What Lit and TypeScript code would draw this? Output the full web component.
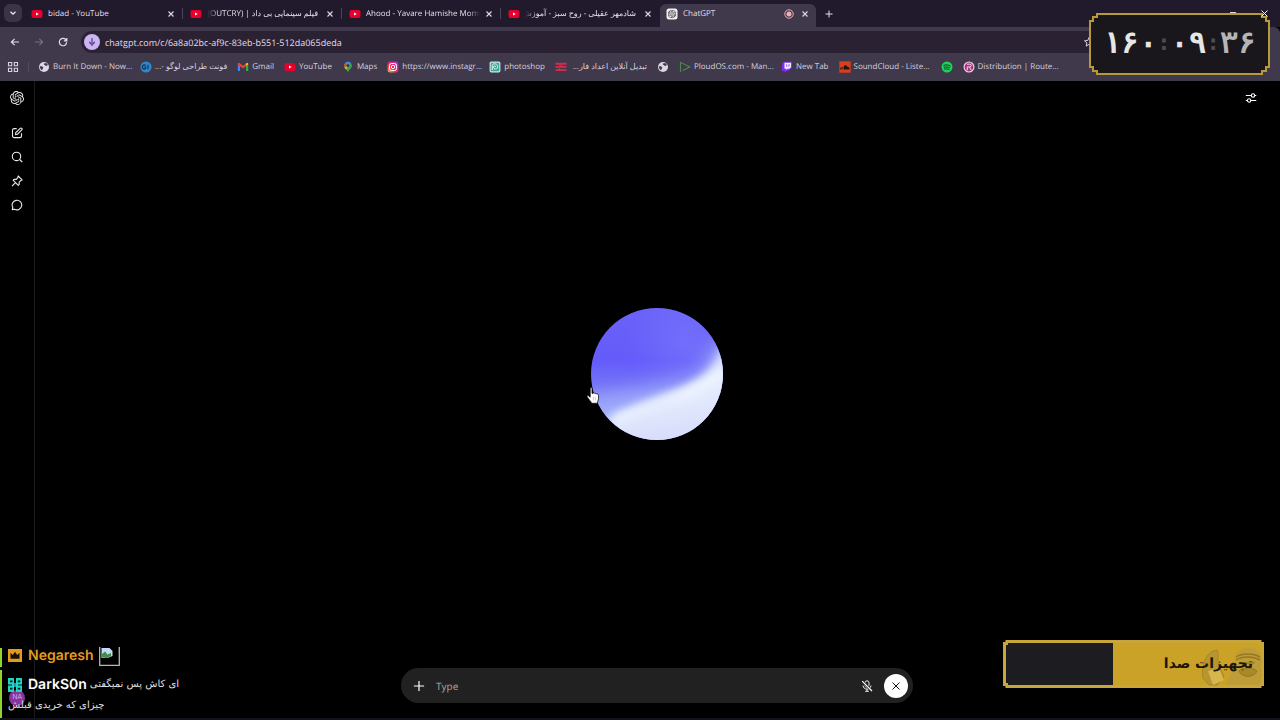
import { LitElement, html, css, svg, nothing } from "lit";
import { customElement, state } from "lit/decorators.js";
import { classMap } from "lit/directives/class-map.js";

const knot = svg`<path fill="currentColor" d="M22.2819 9.8211a5.9847 5.9847 0 0 0-.5157-4.9108 6.0462 6.0462 0 0 0-6.5098-2.9A6.0651 6.0651 0 0 0 4.9807 4.1818a5.9847 5.9847 0 0 0-3.9977 2.9 6.0462 6.0462 0 0 0 .7427 7.0966 5.98 5.98 0 0 0 .511 4.9107 6.051 6.051 0 0 0 6.5146 2.9001A5.9847 5.9847 0 0 0 13.2599 24a6.0557 6.0557 0 0 0 5.7718-4.2058 5.9894 5.9894 0 0 0 3.9977-2.9001 6.0557 6.0557 0 0 0-.7475-7.0729zm-9.022 12.6081a4.4755 4.4755 0 0 1-2.8764-1.0408l.1419-.0804 4.7783-2.7582a.7948.7948 0 0 0 .3927-.6813v-6.7369l2.02 1.1686a.071.071 0 0 1 .038.052v5.5826a4.504 4.504 0 0 1-4.4945 4.4944zm-9.6607-4.1254a4.4708 4.4708 0 0 1-.5346-3.0137l.142.0852 4.783 2.7582a.7712.7712 0 0 0 .7806 0l5.8428-3.3685v2.3324a.0804.0804 0 0 1-.0332.0615L9.74 19.9502a4.4992 4.4992 0 0 1-6.1408-1.6464zM2.3408 7.8956a4.485 4.485 0 0 1 2.3655-1.9728V11.6a.7664.7664 0 0 0 .3879.6765l5.8144 3.3543-2.0201 1.1685a.0757.0757 0 0 1-.071 0l-4.8303-2.7865A4.504 4.504 0 0 1 2.3408 7.872zm16.5963 3.8558L13.1038 8.364 15.1192 7.2a.0757.0757 0 0 1 .071 0l4.8303 2.7913a4.4944 4.4944 0 0 1-.6765 8.1042v-5.6772a.79.79 0 0 0-.407-.667zm2.0107-3.0231l-.142-.0852-4.7735-2.7818a.7759.7759 0 0 0-.7854 0L9.409 9.2297V6.8974a.0662.0662 0 0 1 .0284-.0615l4.8303-2.7866a4.4992 4.4992 0 0 1 6.6802 4.66zM8.3065 12.863l-2.02-1.1638a.0804.0804 0 0 1-.038-.0567V6.0742a4.4992 4.4992 0 0 1 7.3757-3.4537l-.142.0805L8.704 5.459a.7948.7948 0 0 0-.3927.6813zm1.0976-2.3654l2.602-1.4998 2.6069 1.4998v2.9994l-2.5974 1.4997-2.6067-1.4997Z"/>`;

const icons: Record<string, unknown> = {
  youtube: html`<svg class="ic" viewBox="0 0 12 12"><rect x="0.5" y="2" width="11" height="8" rx="2" fill="#e8002c"/><path d="M5 4.4v3.2L7.8 6z" fill="#fff"/></svg>`,
  chatgpt: html`<svg class="ic" viewBox="0 0 12 12"><rect x="0.5" y="0.5" width="11" height="11" rx="2.5" fill="#f2eff4"/><g transform="translate(1.9 1.9) scale(.342)" color="#2a2830">${knot}</g></svg>`,
  globe: html`<svg class="ic" viewBox="0 0 12 12"><circle cx="6" cy="6" r="5" fill="#dcd5e2"/><path d="M1.900 5.200c1.500-.2 3 .2 3.300 1.100s-.6 1-.5 2c-.6.9-1.200.7-1.700.2C2.200 7.600 1.800 6.300 1.900 5.200zM6 2.400l2.300-.3c.8.5 1.400 1.200 1.700 2-.9.1-1.100.9-1.900.8S7.300 4.200 6.700 4 5.600 3 6 2.400z" fill="#41394c"/></svg>`,
  gi: html`<svg class="ic" viewBox="0 0 12 12"><circle cx="6" cy="6" r="5.600" fill="#2f86c9"/><path d="M5.600 4.500A2 2 0 1 0 5.700 7.400V6.100H4.400M8 3.800v4.400" fill="none" stroke="#123150" stroke-width="1.100"/></svg>`,
  gmail: html`<svg class="ic" viewBox="0 0 12 12"><path d="M.8 10V3.200l2.200 1.600V10z" fill="#4285f4"/><path d="M9 10V4.800l2.200-1.600V10z" fill="#34a853"/><path d="M.8 3.600V2.700C.8 1.900 1.700 1.600 2.400 2L6 4.800 9.600 2c.7-.5 1.600 0 1.600.7v.9L6 7.500z" fill="#ea4335"/><path d="M9 4.900V2.500c1-.9 2.200-.5 2.200.6v.4z" fill="#fbbc04"/></svg>`,
  maps: html`<svg class="ic" viewBox="0 0 12 12"><path d="M6 .8a3.900 3.900 0 0 0-3.900 4C2.100 7.500 5 8.300 6 11.500 7 8.300 9.900 7.500 9.900 4.800A3.900 3.900 0 0 0 6 .8z" fill="#34a853"/><path d="M6 .8a3.900 3.900 0 0 0-3 1.400L6 4.800 8.700 1.900A3.900 3.900 0 0 0 6 .8z" fill="#4285f4"/><path d="M3 2.200a4 4 0 0 0-.5 4.300L6 4.800z" fill="#ea4335"/><path d="M2.500 6.500C3 7.500 3.600 8 4.200 8.600L6 4.800z" fill="#fbbc04"/><circle cx="6" cy="4.700" r="1.400" fill="#3b3444"/></svg>`,
  instagram: html`<svg class="ic" viewBox="0 0 12 12"><defs><linearGradient id="ig" x1="0" y1="1" x2="1" y2="0"><stop offset="0" stop-color="#ffb03a"/><stop offset=".45" stop-color="#f0245f"/><stop offset="1" stop-color="#a52de0"/></linearGradient></defs><rect x=".6" y=".6" width="10.800" height="10.800" rx="2.600" fill="url(#ig)"/><rect x="2.500" y="2.500" width="7" height="7" rx="2" fill="none" stroke="#fff" stroke-width="1"/><circle cx="6" cy="6" r="1.700" fill="none" stroke="#fff"/><circle cx="8.200" cy="3.900" r=".5" fill="#fff"/></svg>`,
  swirl: html`<svg class="ic" viewBox="0 0 12 12"><rect x=".6" y=".6" width="10.800" height="10.800" rx="1.600" fill="#c9ebe5"/><rect x="1.700" y="1.700" width="8.600" height="8.600" rx="1" fill="#3fa69b"/><path d="M3.300 9V4.300c0-2.100 5.400-2.300 5.400 1.400 0 3.200-4.200 2.800-4.200.5 0-1.700 2.400-1.500 2.200-.2" fill="none" stroke="#e3f7f3" stroke-width="1"/></svg>`,
  bars: html`<svg class="ic" viewBox="0 0 12 12"><path d="M.5 2.700h3.300l1 .8 1-.8h5.700M.5 5.900h5l1-.7 1 .7h4M.5 9.100h3l1-.7 1 .7h6" fill="none" stroke="#cf2f4c" stroke-width="1.900"/></svg>`,
  ploud: html`<svg class="ic" viewBox="0 0 12 12"><path d="M1.500 11V1.300L10.800 6 3.600 9.500" fill="none" stroke="#4f8a4b" stroke-width="1.100"/></svg>`,
  twitch: html`<svg class="ic" viewBox="0 0 12 12"><path d="M2.500.8 1 3v7h2.600v1.500L5.400 10h2L11 6.700V.8z" fill="#7d2fe8"/><path d="M3.500 1.800v6h1.800v1.300l1.300-1.300h1.700L10 6.200V1.800z" fill="#f4ecff"/><path d="M5.700 3.300v2.400M8 3.300v2.400" stroke="#7d2fe8" stroke-width=".9"/></svg>`,
  soundcloud: html`<svg class="ic" viewBox="0 0 12 12"><rect x=".3" y=".3" width="11.400" height="11.400" fill="#d8401c"/><path d="M1.500 8.400V6.800M2.800 8.500V6M4.100 8.500V5.600" stroke="#2c1016" stroke-width=".8"/><path d="M5 8.500V4.800c1.700-1.200 3.300-.3 3.500 1.300 1.700-.4 2.600 1 1.700 2.400z" fill="#2c1016"/></svg>`,
  spotify: html`<svg class="ic" viewBox="0 0 12 12"><circle cx="6" cy="6" r="5.500" fill="#1fd15c"/><path d="M2.800 4.300c2.200-.7 4.700-.5 6.600.6M3.100 6.200c1.900-.5 3.900-.3 5.600.6M3.400 8c1.600-.4 3.100-.2 4.600.5" fill="none" stroke="#123820" stroke-width=".95" stroke-linecap="round"/></svg>`,
  distro: html`<svg class="ic" viewBox="0 0 12 12"><circle cx="6" cy="6" r="5.500" fill="#f0d5ea"/><circle cx="6" cy="6" r="4.400" fill="#a8327e"/><path d="M4.300 9V5.900h2.600a1.300 1.300 0 0 0 0-2.700H4M6.500 6.200 8.200 9" fill="none" stroke="#f6dff0" stroke-width=".95"/></svg>`,
};

const closeGlyph = html`<svg class="x" viewBox="0 0 8 8"><path d="M1.500 1.500l5 5M6.500 1.500l-5 5" stroke="currentColor" stroke-width="1.100"/></svg>`;

const tabs = [
  { icon: "youtube", title: "bidad - YouTube", rtl: false, active: false },
  { icon: "youtube", title: "فیلم سینمایی بی داد | (OUTCRY)", rtl: true, active: false },
  { icon: "youtube", title: "Ahood - Yavare Hamishe Mome", rtl: false, active: false },
  { icon: "youtube", title: "شادمهر عقیلی - روح سبز - آموزش", rtl: true, active: false },
  { icon: "chatgpt", title: "ChatGPT", rtl: false, active: true },
];

const bookmarks = [
  { icon: "globe", title: "Burn It Down - Now...", rtl: false, cut: true },
  { icon: "gi", title: "فونت طراحی لوگو -...", rtl: true, cut: false },
  { icon: "gmail", title: "Gmail", rtl: false, cut: false },
  { icon: "youtube", title: "YouTube", rtl: false, cut: false },
  { icon: "maps", title: "Maps", rtl: false, cut: false },
  { icon: "instagram", title: "https://www.instagr...", rtl: false, cut: true },
  { icon: "swirl", title: "photoshop", rtl: false, cut: false },
  { icon: "bars", title: "تبدیل آنلاین اعداد فار...", rtl: true, cut: true },
  { icon: "globe", title: "", rtl: false, cut: false },
  { icon: "ploud", title: "PloudOS.com - Man...", rtl: false, cut: true },
  { icon: "twitch", title: "New Tab", rtl: false, cut: false },
  { icon: "soundcloud", title: "SoundCloud - Liste...", rtl: false, cut: true },
  { icon: "spotify", title: "", rtl: false, cut: false },
  { icon: "distro", title: "Distribution | Route...", rtl: false, cut: true },
];

@customElement("app-root")
export class AppRoot extends LitElement {
  @state() private draft = "";

  static styles = css`
    :host {
      display: flex;
      flex-direction: column;
      position: relative;
      height: 100vh;
      overflow: hidden;
      background: #000;
      color: #e4dee9;
      font-family: "Open Sans", "Noto Sans", "DejaVu Sans", sans-serif;
      font-size: 8px;
      line-height: 12px;
      text-rendering: geometricPrecision;
    }
    * { box-sizing: border-box; }
    button, input { font: inherit; color: inherit; background: none; border: 0; padding: 0; margin: 0; outline: none; text-rendering: inherit; }
    button { display: grid; place-items: center; cursor: pointer; }
    svg { display: block; }
    .ic { width: 12px; height: 12px; flex: none; }
    .x { width: 8px; height: 8px; }

    .strip { display: flex; align-items: stretch; height: 27px; background: #211a2c; }
    .search-tabs { width: 18px; height: 18px; margin: 4px 2px 0 4px; border-radius: 6px; background: #3b3346; }
    .tab { position: relative; display: flex; align-items: center; gap: 5px; width: 159px; padding: 0 8px 0 7px; }
    .tab:not(.active):not(.before)::after { content: ""; position: absolute; right: 0; top: 8px; height: 11px; width: 1px; background: #4b4357; }
    .tab.active { height: 23px; margin-top: 4px; width: 156px; padding: 0 7px 4px 6px; background: #40384b; border-radius: 6px 6px 0 0; }
    .title { flex: 1; min-width: 0; text-align: left; white-space: nowrap; display: block; height: 12px; }
    .title.fade { -webkit-mask-image: linear-gradient(90deg, #000 90%, transparent); mask-image: linear-gradient(90deg, #000 90%, transparent); }
    .title[dir="rtl"] { text-align: right; padding-right: 3px; -webkit-mask-image: linear-gradient(270deg, #000 90%, transparent); mask-image: linear-gradient(270deg, #000 90%, transparent); }
    .tab .x { color: #ded8e4; }
    .rec { width: 10px; height: 10px; margin-right: 2px; }
    .new-tab { width: 26px; }

    .toolbar { display: flex; align-items: center; height: 26px; padding: 4px 9px 0; gap: 12px; background: #40384b; border-radius: 0 6px 0 0; }
    .toolbar .nav { width: 12px; height: 12px; }
    .toolbar .nav svg { width: 12px; height: 12px; }
    .omni { flex: 1; display: flex; align-items: center; gap: 5px; height: 22px; padding: 0 6px 0 3px; margin-right: 170px; border-radius: 11px; background: #2a2233; }
    .mic { width: 16px; height: 16px; border-radius: 50%; background: #cdb4f5; }
    .url { flex: 1; min-width: 0; font-size: 9px; height: 14px; }

    .bookmarks { display: flex; align-items: center; gap: 10px; height: 28px; padding: 0 7px 1px; background: #40384b; }
    .bookmarks a { display: flex; align-items: center; gap: 3px; color: #d8d1de; text-decoration: none; white-space: nowrap; }
    .bookmarks .cut { width: 77px; }
    .grid { width: 12px; height: 12px; }
    .divider { width: 1px; height: 10px; background: #544b60; margin: 0 -1px; }

    .app { flex: 1; display: flex; min-height: 0; border-bottom: 2px solid #12121d; }
    .rail { display: flex; flex-direction: column; align-items: center; gap: 12px; width: 35px; padding-top: 10px; border-right: 1px solid #1c1c1c; color: #ececec; }
    .rail svg { width: 12px; height: 12px; }
    .rail button:first-child { margin-bottom: 10px; }
    .rail button:first-child svg { width: 14px; height: 14px; }
    .avatar { margin-top: auto; margin-bottom: 12px; width: 16px; height: 16px; border-radius: 50%; background: #86359e; color: #dfb8ea; font-size: 7px; }
    .voice { position: relative; flex: 1; display: flex; flex-direction: column; align-items: center; padding-right: 1px; }
    .stage { flex: 1; display: grid; place-items: center; padding-bottom: 1px; }
    .orb { width: 132px; height: 132px; }
    .settings { position: absolute; top: 11px; right: 23px; }
    .settings svg { width: 12px; height: 12px; }
    .composer { display: flex; align-items: center; width: 512px; max-width: 90%; height: 35px; margin-bottom: 15px; padding: 0 5px 0 12px; border-radius: 18px; background: #212121; }
    .composer svg { width: 12px; height: 12px; }
    .composer input { flex: 1; min-width: 0; margin-left: 11px; font: 10px/16px "Open Sans", sans-serif; color: #ececec; }
    .composer input::placeholder { color: #a9a9a9; opacity: 1; }
    .end { width: 24px; height: 24px; margin-left: 11px; border-radius: 50%; background: #fff; color: #111; }

    .pointer { position: absolute; left: 586px; top: 387px; width: 14px; height: 18px; }

    .chat { position: absolute; left: 0; bottom: 2px; display: flex; flex-direction: column; gap: 3px; color: #d4d4d4; }
    .msg { border-left: 2px solid #8ed62c; padding-left: 6px; }
    .msg.first { height: 19px; }
    .row { display: flex; align-items: center; gap: 6px; height: 21px; white-space: nowrap; }
    .msg.first .row { height: 16px; }
    .msg.last { padding-top: 4px; padding-bottom: 2px; }
    .badge { width: 14px; height: 14px; }
    .name { font: 600 14px/20px Inter, sans-serif; }
    .name.gold { color: #e39b1f; }
    .name.white { color: #fff; }
    .name + .fa { margin-left: -3px; }
    .fa { font: 400 10px/20px "DejaVu Sans", sans-serif; color: #e0e0e0; }
    .broken { width: 21px; height: 19px; margin-left: -1px; }

    .timer { position: absolute; top: 13px; right: 10px; width: 181px; height: 62px; display: grid; place-items: center; }
    .frame { position: absolute; inset: 0; width: 100%; height: 100%; }
    .clock { position: relative; display: flex; align-items: center; justify-content: space-between; width: 153px; font: 700 30px/34px "DejaVu Sans Mono", "DejaVu Sans", monospace; color: #e6e6e6; direction: ltr; }
    .clock .dim { color: #4d4c50; font-size: 22px; }
    .clock .soft { color: #b5b5b7; }
    .window { position: absolute; top: 9px; right: 11px; display: flex; align-items: center; gap: 22px; color: #fff; }
    .window svg { width: 9px; height: 9px; }

    .goal { position: absolute; right: 16px; bottom: 32px; width: 261px; height: 48px; display: flex; align-items: center; justify-content: flex-end; padding-right: 11px; }
    .goal span { position: relative; font: 700 14px/18px "DejaVu Sans", sans-serif; color: #1e1509; }
  `;

  private send(e: Event) {
    this.draft = (e.target as HTMLInputElement).value;
  }

  render() {
    return html`
      <div class="strip" role="tablist">
        <button class="search-tabs" aria-label="Search tabs"><svg class="x" viewBox="0 0 8 8"><path d="M1.500 2.800L4 5.200l2.500-2.400" fill="none" stroke="#f0ebf4" stroke-width="1.300"/></svg></button>
        ${tabs.map((t, i) => html`
          <div class=${classMap({ tab: true, active: t.active, before: i === 3 })} role="tab">
            ${icons[t.icon]}
            <button class=${classMap({ title: true, fade: t.title.length > 20 })} dir=${t.rtl ? "rtl" : "ltr"}>${t.title}</button>
            ${t.active ? html`<svg class="rec" viewBox="0 0 10 10"><circle cx="5" cy="5" r="4.200" fill="none" stroke="#eeb0b4" stroke-width="1"/><circle cx="5" cy="5" r="2.500" fill="#eeb0b4"/></svg>` : nothing}
            <button aria-label="Close tab">${closeGlyph}</button>
          </div>`)}
        <button class="new-tab" aria-label="New tab"><svg class="x" viewBox="0 0 8 8"><path d="M4 .5v7M.5 4h7" stroke="#e4dee9"/></svg></button>
      </div>
      <div class="toolbar">
        <button class="nav" aria-label="Back"><svg viewBox="0 0 12 12"><path d="M10 6H2.500M5.600 2.800L2.400 6l3.200 3.200" fill="none" stroke="#e4dee9" stroke-width="1.200"/></svg></button>
        <button class="nav" aria-label="Forward"><svg viewBox="0 0 12 12"><path d="M2 6h7.500M6.400 2.800L9.600 6 6.400 9.200" fill="none" stroke="#766d80" stroke-width="1.200"/></svg></button>
        <button class="nav" aria-label="Reload"><svg viewBox="0 0 12 12"><path d="M9.700 6.400A3.700 3.700 0 1 1 8.700 3.500L9.700 4.600M9.800 1.900v2.900H6.900" fill="none" stroke="#e4dee9" stroke-width="1.200"/></svg></button>
        <div class="omni">
          <button class="mic" aria-label="Microphone in use"><svg class="ic" viewBox="0 0 12 12"><path d="M6 2v5M3.500 5.700C3.700 7.200 4.600 8 6 8s2.300-.8 2.500-2.300M6 8v2" fill="none" stroke="#55407c" stroke-width="1.200"/></svg></button>
          <input class="url" aria-label="Address" value="chatgpt.com/c/6a8a02bc-af9c-83eb-b551-512da065deda" />
          <svg class="ic" viewBox="0 0 12 12"><path d="M6 1.500l1.300 3 3.200.3-2.400 2.100.7 3.200L6 8.400l-2.800 1.700.7-3.200L1.500 4.800l3.200-.3z" fill="none" stroke="#d8d1de"/></svg>
        </div>
      </div>
      <nav class="bookmarks">
        <button class="grid" aria-label="Apps"><svg class="ic" viewBox="0 0 12 12"><path d="M1.500 1.500h3.200v3.200H1.500zM7.300 1.500h3.200v3.200H7.300zM1.500 7.300h3.200v3.200H1.500zM7.300 7.300h3.200v3.200H7.300z" fill="none" stroke="#d8d1de" stroke-width="1.100"/></svg></button>
        <i class="divider"></i>
        ${bookmarks.map((b) => html`<a href="#" aria-label=${b.title || b.icon}>${icons[b.icon]}${b.title ? html`<span class=${classMap({ cut: b.cut })} dir=${b.rtl ? "rtl" : "ltr"}>${b.title}</span>` : nothing}</a>`)}
      </nav>
      <div class="app">
        <aside class="rail">
          <button aria-label="Home"><svg viewBox="0 0 24 24">${knot}</svg></button>
          <button aria-label="New chat"><svg viewBox="0 0 12 12"><path d="M5.700 1.600H3.200A1.700 1.700 0 0 0 1.500 3.300v5.600a1.700 1.700 0 0 0 1.700 1.700h5.600a1.700 1.700 0 0 0 1.700-1.700V6.300M4.600 7.600l.2-2 4.400-4.300a1.100 1.100 0 0 1 1.600 1.600L6.500 7.200z" fill="none" stroke="currentColor" stroke-width="1.100"/></svg></button>
          <button aria-label="Search"><svg viewBox="0 0 12 12"><circle cx="5.500" cy="5.400" r="4.200" fill="none" stroke="currentColor" stroke-width="1.100"/><path d="M8.600 8.500l2.700 2.700" stroke="currentColor" stroke-width="1.200"/></svg></button>
          <button aria-label="Pinned"><svg viewBox="0 0 12 12"><path d="M7.200 1l3.900 3.900-1.300.7-1.700 1.600.1 2.200-1 .9L2.100 5.200l1-.9 2.200.1 1.500-1.700zM4.500 7.600L1 11.100" fill="none" stroke="currentColor" stroke-width="1.100" stroke-linejoin="round"/></svg></button>
          <button aria-label="Chats"><svg viewBox="0 0 12 12"><path d="M1.300 10.600l.5-2.100A4.800 4.800 0 1 1 3.500 10.200z" fill="none" stroke="currentColor" stroke-width="1.100" stroke-linejoin="round"/></svg></button>
          <button class="avatar" aria-label="Profile">NA</button>
        </aside>
        <main class="voice">
          <button class="settings" aria-label="Voice settings"><svg viewBox="0 0 12 12"><path d="M.8 3.500h5.400M9.800 3.500h1.500M.8 8.500h1.500M5.900 8.500h5.400" stroke="#fff" stroke-width="1.100"/><circle cx="8" cy="3.500" r="1.700" fill="none" stroke="#fff" stroke-width="1.100"/><circle cx="4.100" cy="8.500" r="1.700" fill="none" stroke="#fff" stroke-width="1.100"/></svg></button>
          <div class="stage">
            <svg class="orb" viewBox="0 0 132 132">
              <defs>
                <clipPath id="disc"><circle cx="66" cy="66" r="66"/></clipPath>
                <linearGradient id="sky" x1="0" y1="0" x2="0" y2="1"><stop offset="0" stop-color="#6a62f8"/><stop offset=".4" stop-color="#645bfa"/><stop offset=".58" stop-color="#7574f8"/><stop offset=".78" stop-color="#989df8"/></linearGradient>
                <linearGradient id="cloud" x1=".4" y1="0" x2=".6" y2="1"><stop offset="0" stop-color="#d5ddfd"/><stop offset=".5" stop-color="#e4ebfd"/><stop offset="1" stop-color="#ccd0fb"/></linearGradient>
                <radialGradient id="glow"><stop offset="0" stop-color="#8080fc" stop-opacity=".5"/><stop offset="1" stop-color="#8080fc" stop-opacity="0"/></radialGradient>
                <filter id="soft" x="-30%" y="-30%" width="160%" height="160%"><feGaussianBlur stdDeviation="5"/></filter>
                <filter id="wide" x="-50%" y="-50%" width="200%" height="200%"><feGaussianBlur stdDeviation="9"/></filter>
              </defs>
              <g clip-path="url(#disc)">
                <rect width="132" height="132" fill="url(#sky)"/>
                <circle cx="96" cy="36" r="60" fill="url(#glow)"/>
                <path d="M-10 92Q50 82 104 66Q116 50 120 36L150 30V110L0 124z" fill="#a2b1f9" opacity=".7" filter="url(#wide)"/>
                <path d="M0 119Q32 104 62 95Q90 84 112 68Q124 56 132 38L160 24V160H0z" fill="url(#cloud)" filter="url(#soft)"/>
                <path d="M22 112Q60 95 90 86Q118 76 132 64" fill="none" stroke="#f0f6ff" stroke-width="9" filter="url(#soft)"/>
              </g>
            </svg>
          </div>
          <form class="composer" @submit=${(e: Event) => e.preventDefault()}>
            <button type="button" aria-label="Add"><svg viewBox="0 0 12 12"><path d="M6 .9v10.200M.9 6h10.200" stroke="#fff" stroke-width="1.200"/></svg></button>
            <input aria-label="Type" placeholder="Type" .value=${this.draft} @input=${this.send} />
            <button type="button" aria-label="Unmute"><svg viewBox="0 0 12 12"><rect x="4" y=".8" width="4" height="6.400" rx="2" fill="none" stroke="#f0f0f0"/><path d="M2 5.600c.2 2.100 1.800 3.500 4 3.500s3.800-1.400 4-3.500M6 9.100v2.200M4.200 11.300h3.600" fill="none" stroke="#f0f0f0"/><path d="M1.200 1.200l9.800 9.800" stroke="#212121" stroke-width="2.400"/><path d="M1.200 1.200l9.800 9.800" stroke="#fff" stroke-width="1.200"/></svg></button>
            <button type="button" class="end" aria-label="End voice"><svg viewBox="0 0 12 12"><path d="M2.500 2.500l7 7M9.500 2.500l-7 7" stroke="currentColor"/></svg></button>
          </form>
        </main>
      </div>

      <svg class="pointer" viewBox="0 0 14 18"><path d="M4.200 1.400c0-1.200 1.800-1.200 1.800 0v5l1-.1c.7-.6 1.600-.4 1.900.3.700-.4 1.500-.2 1.800.5 1-.3 1.800.2 1.800 1.200v3.500c0 1.200-.8 2-1 3.300v1.200H5.300v-1C4.300 13.800 2.300 11.800 1.200 9.900c-.5-1 .7-1.700 1.500-1l1.500 1.300z" fill="#fff" stroke="#111" stroke-width=".8"/><path d="M7.300 9.800v3.500M9.300 9.800v3.500" stroke="#aaa" stroke-width=".6"/></svg>

      <section class="chat">
        <div class="msg first"><div class="row">
          <svg class="badge" viewBox="0 0 14 14"><path d="M0 0h14v13H0z" fill="#e39b1f"/><path d="M2.500 9.800V3.800l2.300 2.300L7 2.700l2.200 3.400 2.300-2.300v6z" fill="#1a1002"/></svg>
          <span class="name gold">Negaresh</span>
          <svg class="broken" viewBox="0 0 21 19"><path d="M.7 0v18.300h19.600V0" fill="none" stroke="#b5b5b5" stroke-width="1.300"/><path d="M2.500 1h8l3 3v5l-5 2H2.500z" fill="#c3dcf5"/><path d="M2.500 10.500V7.500L6 4.500l2.500 3L12 6v3L8 11z" fill="#3f8f4a"/></svg>
        </div></div>
        <div class="msg last">
          <div class="row">
            <svg class="badge" viewBox="0 0 14 14"><path d="M0 0h6v14H0zM8 0h6v14H8z" fill="#20d5c4"/><path d="M2 2.500h2.500v1.800H2zM2 9.700h2.500v1.800H2zM9.800 2.500h2.500v1.800H9.800zM9.800 9.700h2.500v1.800H9.800zM0 6.500h4v1H0zM10 6.500h4v1h-4z" fill="#06191b"/><path d="M6 5h2v4H6z" fill="#1a9ab0"/></svg>
            <span class="name white">DarkS0n</span>
            <span class="fa" dir="rtl">ای کاش پس نمیگفتی</span>
          </div>
          <div class="row"><span class="fa" dir="rtl">چیزای که خریدی قبلش</span></div>
        </div>
      </section>

      <section class="timer" role="timer">
        <svg class="frame" viewBox="0 0 181 62"><path d="M8 1h165v3h4v4h3v46h-3v4h-4v3H8v-3H4v-4H1V8h3V4h4z" fill="#1a171c" stroke="#b8993a" stroke-width="2"/></svg>
        <div class="clock"><span>۱</span><span>۶</span><span>۰</span><span class="dim">:</span><span>۰</span><span>۹</span><span class="dim">:</span><span class="soft">۳</span><span class="soft">۶</span></div>
      </section>
      <div class="window">
        <svg viewBox="0 0 9 9"><path d="M1 4V3h5.500l1 1z" fill="#ddd"/></svg>
        <button aria-label="Close window"><svg viewBox="0 0 9 9"><path d="M1.500 1.500l6 6M7.500 1.500l-6 6" stroke="#fff"/></svg></button>
      </div>

      <section class="goal">
        <svg class="frame" viewBox="0 0 261 48">
          <path d="M4 1.500h253v2h2.500v41H257v2H4v-2H1.500v-41H4z" fill="#c9a227" stroke="#c9a63a" stroke-width="3"/>
          <path d="M5 3h105v42H5v-2H3V5h2z" fill="#1d1c20"/>
          <g opacity=".5">
            <path d="M224 45c1-9 4-13 9-15-4-13 1-22 12-22 12 0 16 9 13 20 2 3 1 10-1 17z" fill="#b5984a"/>
            <path d="M233 17c6-4 17-4 24 0M233 20c6-4 17-4 24 0" fill="none" stroke="#64501a" stroke-width="1.500"/>
            <path d="M236 22c3 3 5 3 7 0 3 3 6 3 9 0M236 31c4-4 14-4 18 0-3 7-15 7-18 0z" fill="#8d722c" stroke="#64501a"/>
            <path d="M200 38c-2-12 3-27 14-28 3 5-1 10 2 15l5 12-7 8h-8z" fill="#a98c37" stroke="#85692a"/>
            <path d="M205 31l11-3 5 12-11 5z" fill="#e6cd74"/>
          </g>
        </svg>
        <span dir="rtl">تجهیزات صدا</span>
      </section>
    `;
  }
}
